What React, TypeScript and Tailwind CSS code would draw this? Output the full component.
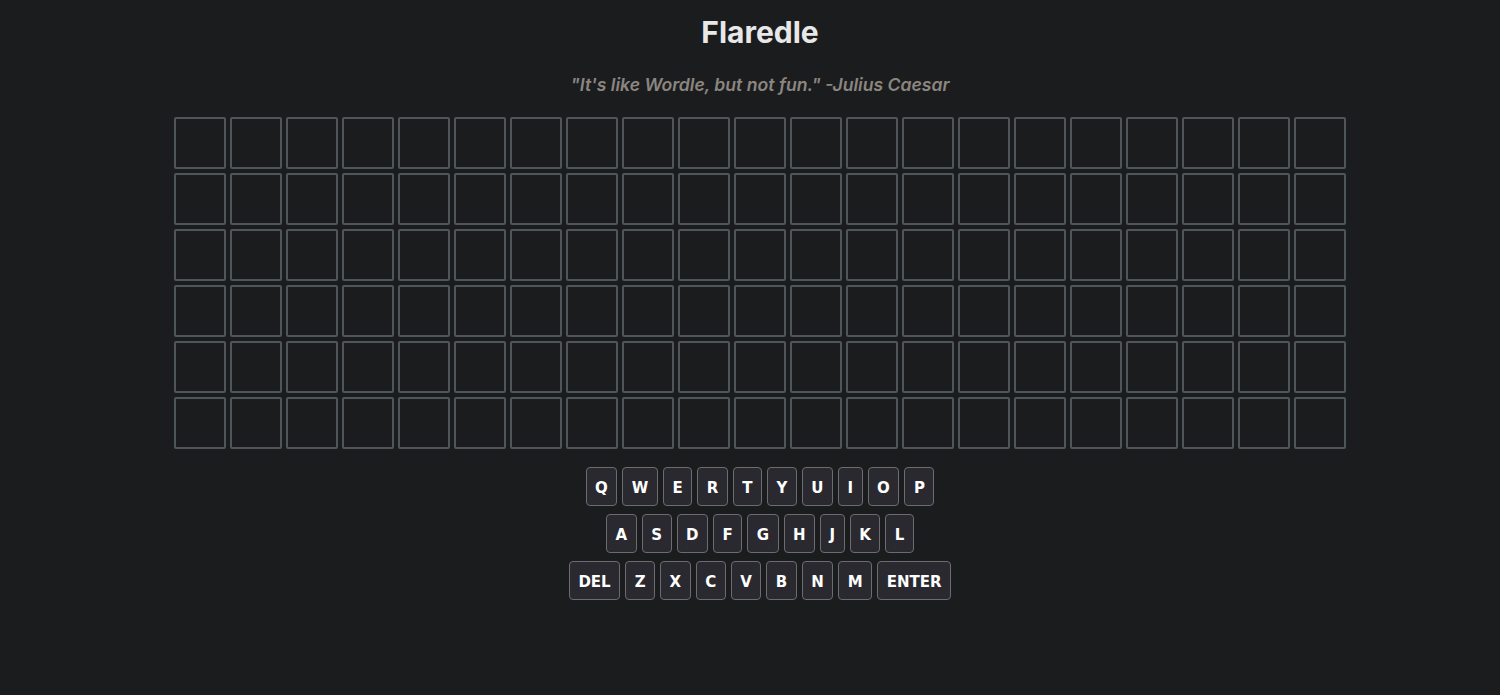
const ROWS = 6
const COLS = 21

const keyRows = [
    ["Q", "W", "E", "R", "T", "Y", "U", "I", "O", "P"],
    ["A", "S", "D", "F", "G", "H", "J", "K", "L"],
    ["DEL", "Z", "X", "C", "V", "B", "N", "M", "ENTER"],
]

function Tile() {
    return <div className="w-[52px] h-[52px] border-2 border-[#4f565a] rounded-[2px]" />
}

function Key({ label }: { label: string }) {
    return (
        <button className="h-[39px] px-[8.5px] pt-[3px] bg-[#2a2930] border border-[#6b6b70] rounded-[4px] text-white text-[15px] font-bold font-['DejaVu_Sans',sans-serif]">
            {label}
        </button>
    )
}

export default function App() {
    return (
        <div className="min-h-[695px] bg-[#1b1c1e] pl-[20px] flex flex-col items-center font-['Inter',sans-serif]">
            <h1 className="mt-[14px] text-[30px] leading-[36px] font-bold text-[#e8e8e8]">Flaredle</h1>
            <p className="mt-[21px] text-[17.6px] leading-[28px] italic font-semibold text-[#8b8680]">
                "It's like Wordle, but not fun." -Julius Caesar
            </p>

            <div className="mt-[18px] flex flex-col gap-[4px]">
                {Array.from({ length: ROWS }).map((_, r) => (
                    <div key={r} className="flex gap-[4px]">
                        {Array.from({ length: COLS }).map((_, c) => (
                            <Tile key={c} />
                        ))}
                    </div>
                ))}
            </div>

            <div className="mt-[18px] flex flex-col items-center gap-[8px]">
                {keyRows.map((row, i) => (
                    <div key={i} className="flex gap-[5px]">
                        {row.map((k) => (
                            <Key key={k} label={k} />
                        ))}
                    </div>
                ))}
            </div>
        </div>
    )
}
